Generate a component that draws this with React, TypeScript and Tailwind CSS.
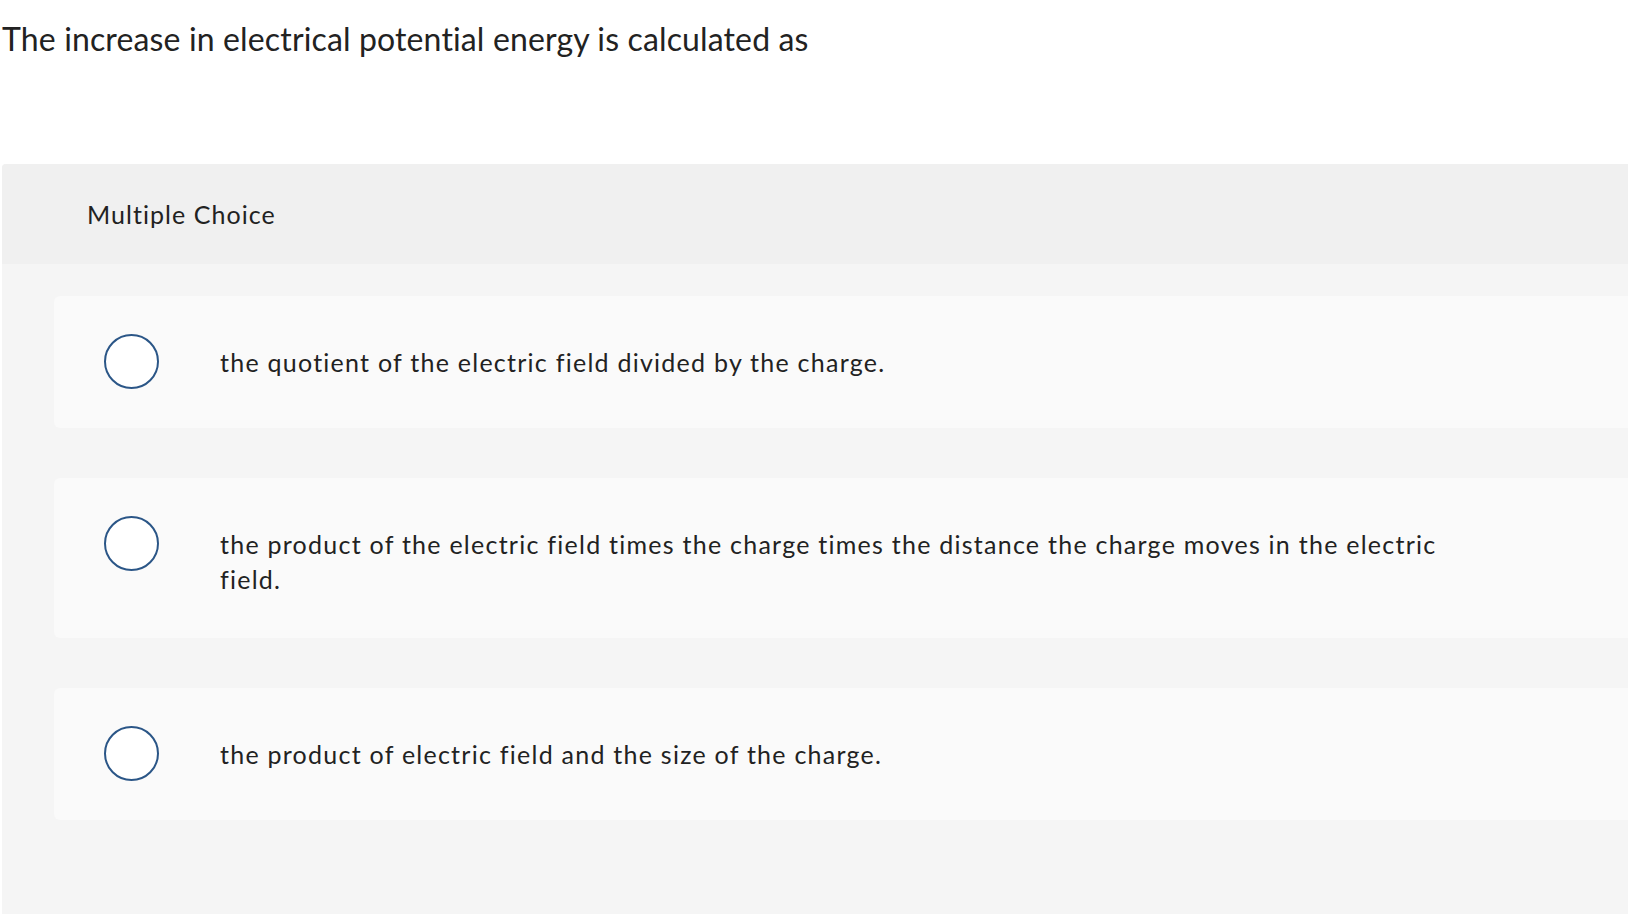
const options = [
  "the quotient of the electric field divided by the charge.",
  "the product of the electric field times the charge times the distance the charge moves in the electric field.",
  "the product of electric field and the size of the charge.",
];

function Radio() {
  return (
    <span className="block w-[55px] h-[55px] shrink-0 rounded-full border-2 border-[#2b5687] bg-white" />
  );
}

export default function App() {
  return (
    <div
      className="w-[1628px] h-[914px] overflow-hidden bg-white text-[#222222]"
      style={{
        fontFamily: "Lato, 'Liberation Sans', sans-serif",
        fontVariantLigatures: "none",
      }}
    >
      <h1 className="pl-[2px] pt-[19px] text-[32px] leading-[40px] tracking-[0.14px]">
        The increase in electrical potential energy is calculated as
      </h1>

      <div className="mt-[105px] ml-[2px] h-[800px] rounded-tl-[4px] overflow-hidden bg-[#f5f5f5]">
        <div className="h-[100px] bg-[#f0f0f0] pl-[85px] pt-[35px] text-[25px] leading-[30px] tracking-[1.05px]">
          Multiple Choice
        </div>

        <div className="flex flex-col gap-[50px] pl-[52px] pt-[32px]">
          {options.map((text) => (
            <div
              key={text}
              className="flex items-start rounded-l-[6px] bg-[#fafafa] pl-[50px] pt-[38px] pb-[39px]"
            >
              <Radio />
              <p className="ml-[61px] mt-[11px] pb-[2px] max-w-[1270px] text-[25px] leading-[35px] tracking-[1.25px]">
                {text}
              </p>
            </div>
          ))}
        </div>
      </div>
    </div>
  );
}
